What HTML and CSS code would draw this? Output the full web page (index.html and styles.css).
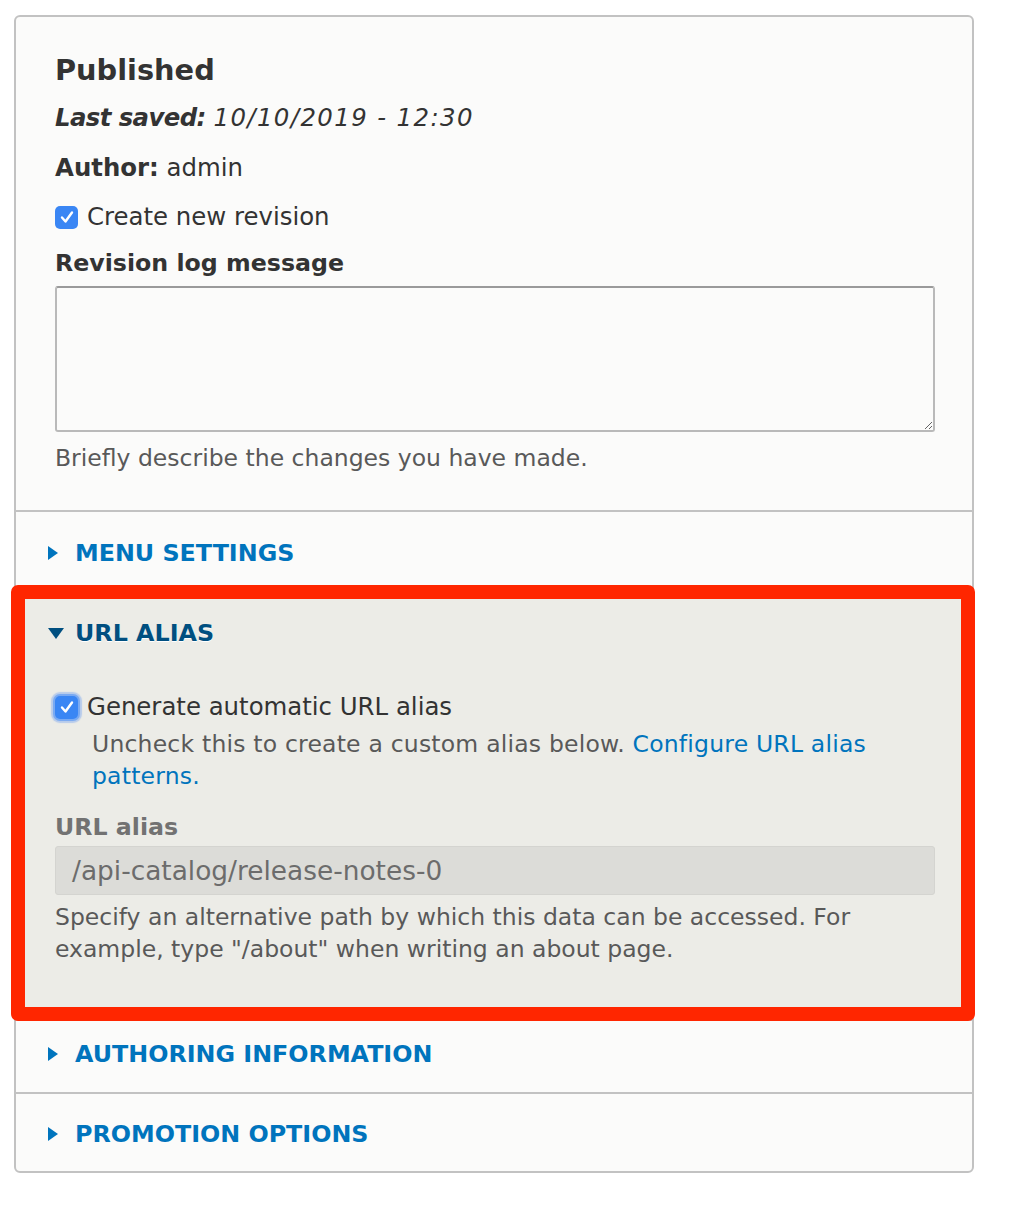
FILE: index.html
```html
<!DOCTYPE html>
<html lang="en">
<head>
<meta charset="utf-8">
<title>Node sidebar</title>
<link rel="stylesheet" href="styles.css">
</head>
<body>
<div class="panel">
  <section class="meta">
    <h4 class="status">Published</h4>
    <div class="line saved"><em><strong class="saved-key">Last saved:</strong> <span class="saved-date">10/10/2019 - 12:30</span></em></div>
    <div class="line author"><strong>Author:</strong> admin</div>
    <label class="line check check-rev">
      <span class="box"><svg viewBox="0 0 22 22" width="22" height="22"><path d="M6 11.5 L9.5 15.5 L16 6.5" fill="none" stroke="#fff" stroke-width="2.4" stroke-linecap="round" stroke-linejoin="round"/></svg></span>
      <span>Create new revision</span>
    </label>
    <div class="line label log-label">Revision log message</div>
    <textarea class="textarea"></textarea>
    <div class="desc log-desc">Briefly describe the changes you have made.</div>
  </section>

  <section class="details closed menu">
    <div class="summary"><span class="tri-right"></span><span class="summary-text">MENU SETTINGS</span></div>
  </section>

  <section class="details open alias">
    <div class="summary"><span class="tri-down"></span><span class="summary-text">URL ALIAS</span></div>
    <label class="line check check-auto">
      <span class="box focus"><svg viewBox="0 0 22 22" width="22" height="22"><path d="M6 11.5 L9.5 15.5 L16 6.5" fill="none" stroke="#fff" stroke-width="2.4" stroke-linecap="round" stroke-linejoin="round"/></svg></span>
      <span>Generate automatic URL alias</span>
    </label>
    <div class="desc check-desc">Uncheck this to create a custom alias below. <a href="#">Configure URL alias patterns.</a></div>
    <div class="line label disabled-label">URL alias</div>
    <div class="input-disabled">/api-catalog/release-notes-0</div>
    <div class="desc alias-desc">Specify an alternative path by which this data can be accessed. For example, type "/about" when writing an about page.</div>
    <div class="highlight"></div>
  </section>

  <section class="details closed authoring">
    <div class="summary"><span class="tri-right"></span><span class="summary-text">AUTHORING INFORMATION</span></div>
  </section>

  <section class="details closed promotion">
    <div class="summary"><span class="tri-right"></span><span class="summary-text">PROMOTION OPTIONS</span></div>
  </section>
</div>
</body>
</html>
```

FILE: styles.css
```css
html, body {
  margin: 0;
  padding: 0;
  background: #ffffff;
}

body {
  font-family: "DejaVu Sans", "Liberation Sans", sans-serif;
  color: #333333;
  font-size: 24.4px;
}

.panel {
  margin: 15px 0 0 14px;
  width: 960px;
  box-sizing: border-box;
  border: 2px solid #c2c2c2;
  border-radius: 6px;
  background: #fbfbfa;
}

.meta {
  padding: 33px 37px 36px 39px;
  border-bottom: 2px solid #c2c2c2;
}

.status {
  margin: 0;
  font-size: 28.8px;
  line-height: 40px;
  font-weight: bold;
  color: #333;
}

.line {
  line-height: 32px;
  display: block;
}

.saved { margin-top: 12px; }
.saved-key { letter-spacing: -0.6px; }
.saved-date { letter-spacing: 1.4px; }
.author { margin-top: 18px; }

.check {
  display: flex;
  align-items: center;
  gap: 9px;
}

.check-rev { margin-top: 17px; }

.box {
  width: 23px;
  height: 23px;
  border-radius: 5px;
  background: #3a86f4;
  display: flex;
  align-items: center;
  justify-content: center;
  flex: none;
}

.box svg { display: block; }

.box.focus {
  box-shadow: 0 0 0 2px #7aaaf2, 0 0 1px 4px rgba(120, 165, 240, 0.45);
}

.label {
  font-weight: bold;
  font-size: 23.7px;
}

.log-label { margin-top: 14px; }

.textarea {
  display: block;
  margin-top: 7px;
  width: 880px;
  height: 146px;
  box-sizing: border-box;
  border: 2px solid #b9b9b9;
  border-top-color: #9a9a9a;
  border-radius: 3px;
  background: #fbfbfa;
  resize: vertical;
  font: inherit;
}

.desc {
  font-size: 23.5px;
  line-height: 32px;
  color: #595959;
}

.log-desc { margin-top: 10px; }

.details {
  border-bottom: 2px solid #c2c2c2;
  position: relative;
}

.details:last-child {
  border-bottom: 0;
}

.summary {
  display: flex;
  align-items: center;
  padding-left: 32px;
  line-height: 32px;
}

.summary-text {
  font-size: 23.8px;
  font-weight: bold;
  color: #0074bd;
  margin-left: 17px;
}

.tri-right {
  width: 0;
  height: 0;
  border-top: 7.5px solid transparent;
  border-bottom: 7.5px solid transparent;
  border-left: 10px solid #0074bd;
}

.tri-down {
  width: 0;
  height: 0;
  border-left: 8px solid transparent;
  border-right: 8px solid transparent;
  border-top: 11px solid #004f80;
  margin-right: -6px;
}

.open .summary-text {
  color: #004f80;
  text-shadow: 0 1px 0 #ffffff;
}

.menu { padding: 25px 0 25px 0; }

.alias {
  background: #ecece7;
  padding: 21px 37px 54px 0;
}

.alias .check,
.alias .desc,
.alias .label,
.alias .input-disabled {
  margin-left: 39px;
}

.check-auto { margin-top: 42px; }

.check-desc {
  margin-top: 5px;
  padding-left: 37px;
  letter-spacing: 0.2px;
}

.check-desc a {
  color: #0074bd;
  text-decoration: none;
}

.disabled-label {
  margin-top: 19px;
  color: #727272;
}

.input-disabled {
  margin-top: 3px;
  height: 49px;
  box-sizing: border-box;
  border: 1px solid #d4d4d0;
  border-radius: 3px;
  background: #dcdcd8;
  color: #6c6c6c;
  font-size: 26.4px;
  line-height: 47px;
  padding-left: 16px;
}

.alias-desc {
  margin-top: 6px;
}

.highlight {
  position: absolute;
  top: -11px;
  left: -5px;
  right: -3px;
  bottom: -2px;
  border: 14px solid #ff2600;
  border-radius: 7px;
  pointer-events: none;
}

.authoring { padding: 17px 0 22px 0; }
.promotion { padding: 24px 0 21px 0; }
```
